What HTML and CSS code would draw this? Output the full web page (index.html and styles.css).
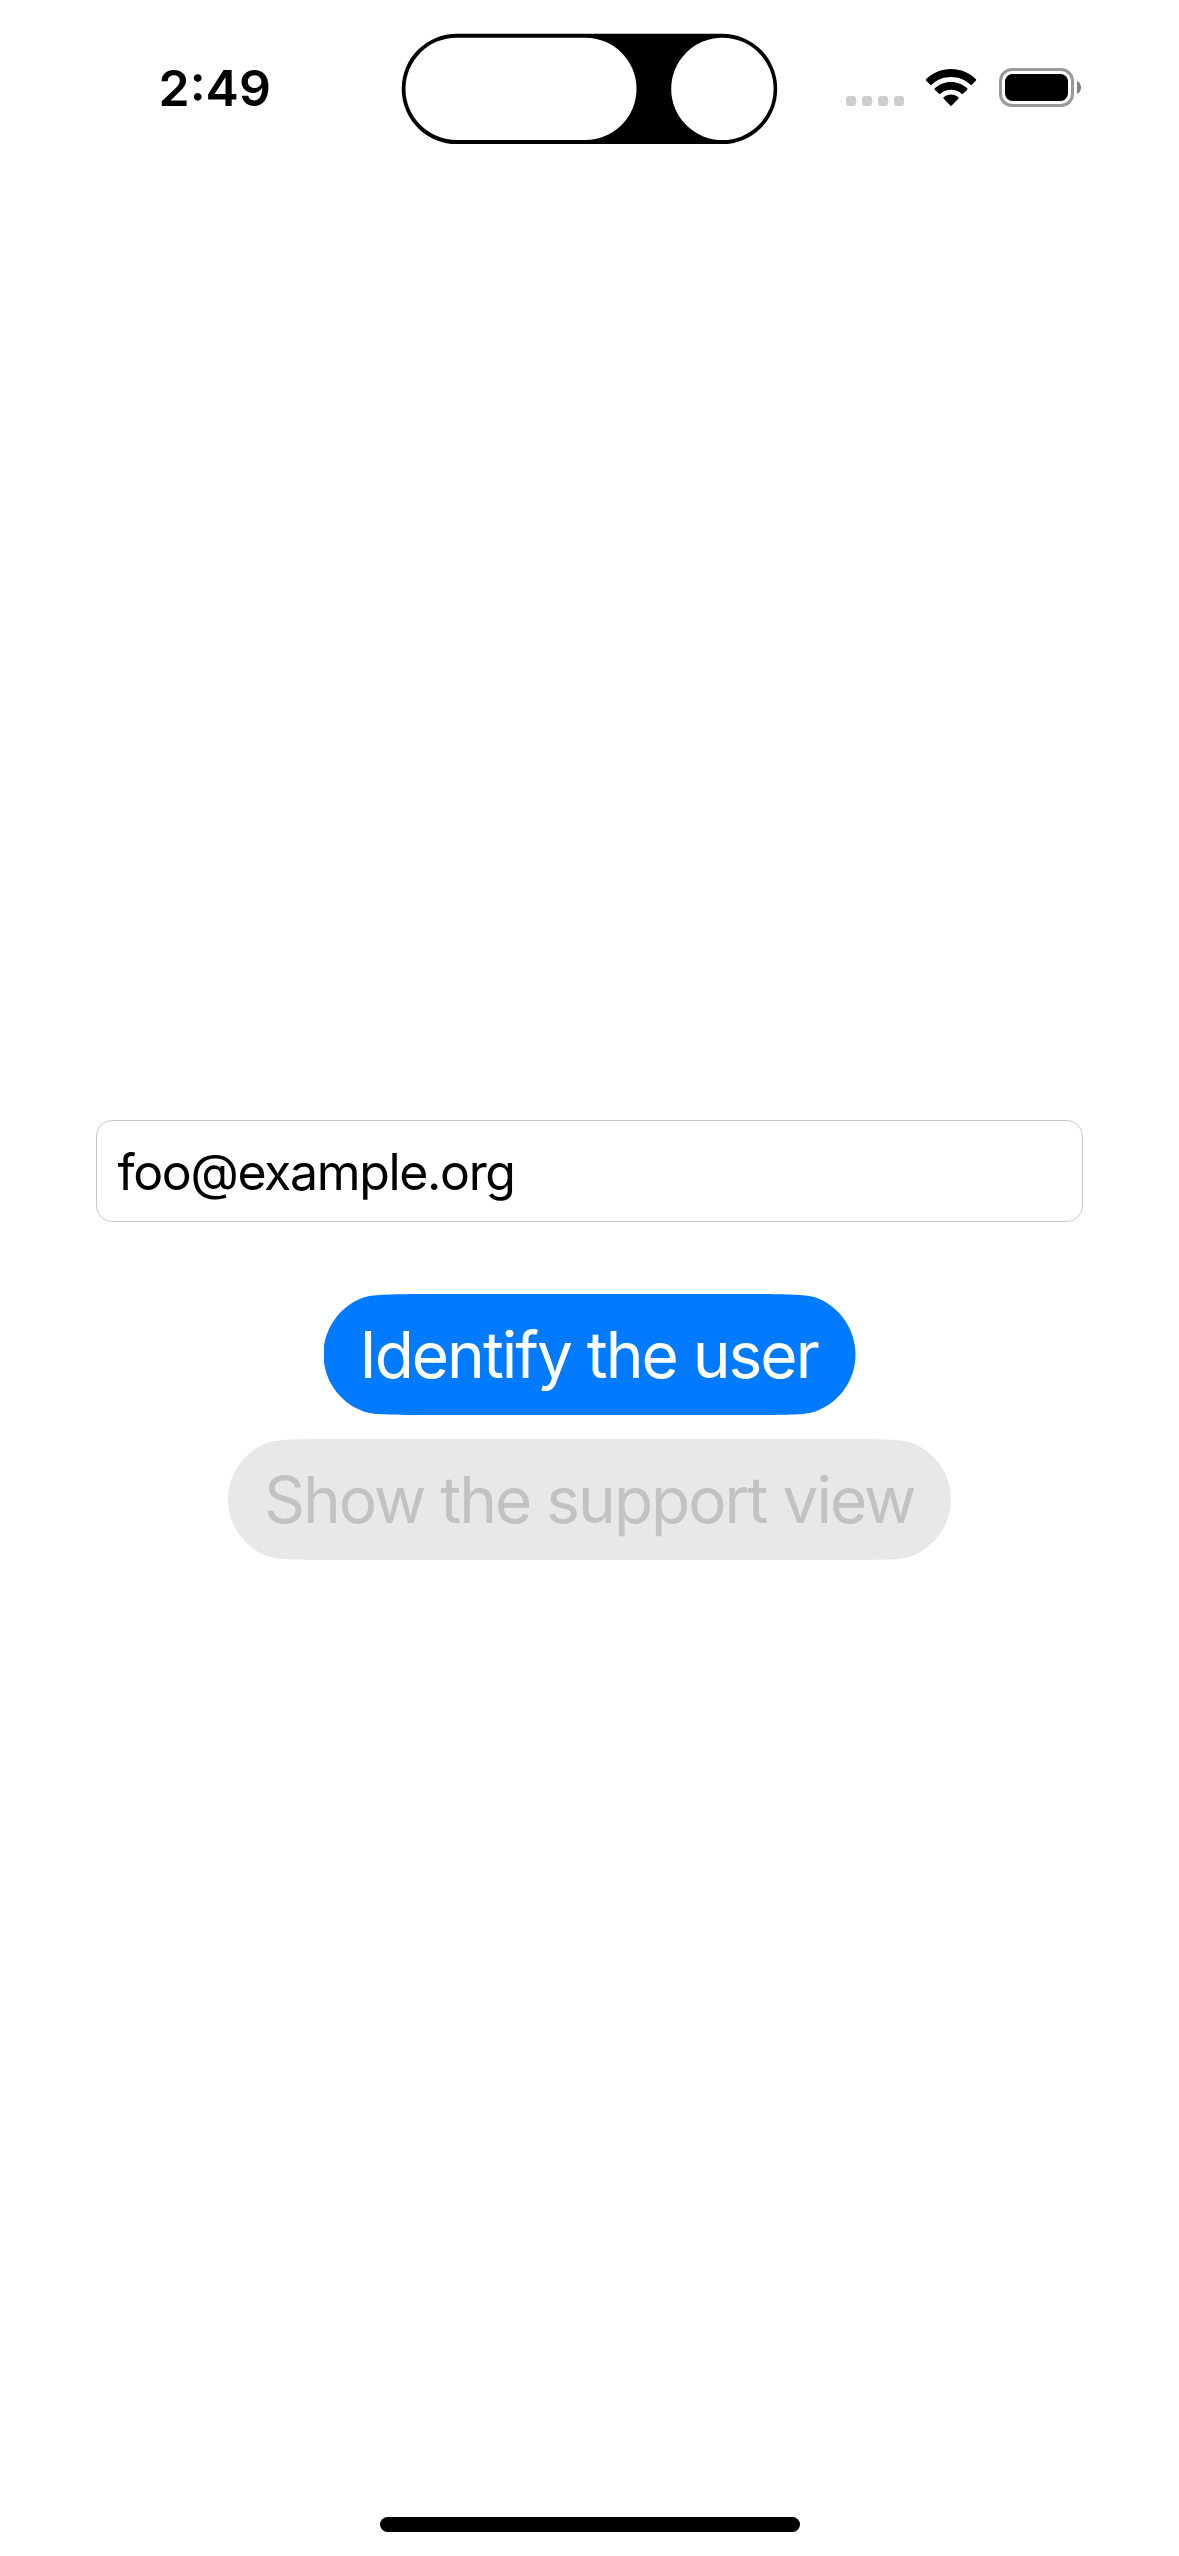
FILE: index.html
```html
<!DOCTYPE html>
<html lang="en">
<head>
<meta charset="utf-8">
<title>Support</title>
<link rel="stylesheet" href="styles.css">
</head>
<body>
<div class="screen">
  <header class="status-bar">
    <time class="clock">2:49</time>
    <svg class="island" viewBox="0 0 377 112" aria-hidden="true">
      <rect x="0.7" y="0.7" width="375.5" height="110.4" rx="55.2" fill="#000"/>
      <rect x="4.5" y="4.7" width="231" height="102.3" rx="51.1" fill="#fff"/>
      <circle cx="321.4" cy="55.9" r="51.2" fill="#fff"/>
    </svg>
    <div class="indicators">
      <div class="signal"><i></i><i></i><i></i><i></i></div>
      <svg class="wifi" viewBox="0 0 52 38" aria-hidden="true">
        <path d="M26 0C35.7 0 44.6 3.8 51 10.2Q51.6 10.9 51 11.6L46.8 15.7Q46.1 16.3 45.4 15.7C40.2 10.7 33.5 8 26 8S11.8 10.7 6.6 15.7Q5.9 16.3 5.2 15.7L1 11.6Q.4 10.9 1 10.2C7.4 3.8 16.3 0 26 0Z"/>
        <path d="M26 13C32.2 13 37.9 15.3 42.2 19.3Q42.9 20 42.2 20.7L38 24.8Q37.3 25.4 36.6 24.8C33.7 22.2 30.1 20.8 26 20.8S18.3 22.2 15.4 24.8Q14.7 25.4 14 24.8L9.8 20.7Q9.1 20 9.8 19.3C14.1 15.3 19.8 13 26 13Z"/>
        <path d="M26 25.6C28.8 25.6 31.3 26.6 33.3 28.3Q34 29 33.3 29.7L26.7 36.5Q26 37.2 25.3 36.5L18.7 29.7Q18 29 18.7 28.3C20.7 26.6 23.2 25.6 26 25.6Z"/>
      </svg>
      <svg class="battery" viewBox="0 0 83 39" aria-hidden="true">
        <rect x="1.5" y="1.5" width="72" height="36" rx="11.5" fill="none" stroke="#999" stroke-width="3"/>
        <rect x="6" y="6" width="63" height="27" rx="7.5" fill="#000"/>
        <path d="M78 13C80.8 14.2 82 16.7 82 19.5S80.8 24.8 78 26Z" fill="#808080"/>
      </svg>
    </div>
  </header>
  <main class="content">
    <div class="field" role="textbox"><span class="field-text">foo@example.org</span></div>
    <button class="pill primary"><span class="label">Identify the user</span></button>
    <button class="pill muted" disabled><span class="label">Show the support view</span></button>
  </main>
  <footer class="home"><div class="home-bar"></div></footer>
</div>
</body>
</html>
```
FILE: styles.css
```css
* { box-sizing: border-box; }
body {
  margin: 0;
  background: #fff;
  color: #000;
  font-family: Inter, "Liberation Sans", sans-serif;
}
.screen {
  width: 1179px;
  height: 2556px;
  display: flex;
  flex-direction: column;
}
.status-bar {
  height: 177px;
  display: grid;
  grid-template-columns: 401px 377px 1fr;
  align-items: start;
  padding-top: 33px;
}
.clock {
  padding-left: 158.5px;
  margin-top: 25px;
  font-size: 50px;
  line-height: 60px;
  font-weight: 600;
  white-space: nowrap;
}
.island { width: 377px; height: 112px; }
.indicators {
  display: flex;
  align-items: flex-start;
  padding: 35px 0 0 68px;
}
.signal { display: flex; gap: 6px; margin-top: 28px; }
.signal i { width: 10px; height: 10px; border-radius: 3px; background: #ccc; }
.wifi { width: 52px; height: 38px; margin: 1px 0 0 21px; }
.battery { width: 83px; height: 39px; margin-left: 22px; }
.content {
  flex: 1;
  padding: 943px 96px 0;
  display: flex;
  flex-direction: column;
  align-items: center;
}
.field {
  width: 987px;
  height: 102px;
  border: 1px solid #c9c9c9;
  border-radius: 16px;
  padding: 21px 0 0 20.5px;
  margin-bottom: 72px;
}
.field-text { display: block; font-size: 50px; line-height: 60px; letter-spacing: -1.35px; white-space: nowrap; }
.pill {
  height: 121px;
  border: 0;
  padding: 0;
  font: 400 64px/78px Inter, "Liberation Sans", sans-serif;
  letter-spacing: -2.03px;
  text-align: left;
  white-space: nowrap;
}
.label { display: block; }
.primary {
  width: 532px;
  padding-left: 36px;
  margin-bottom: 24px;
  background: #007aff;
  color: #fff;
  clip-path: path("M0 60.5C0 35.1 16.1 12.2 40 3.6C50 .3 62 .6 92 0H440C470 .6 482 .3 492 3.6C515.9 12.2 532 35.1 532 60.5S515.9 108.8 492 117.4C482 120.7 470 120.4 440 121H92C62 120.4 50 120.7 40 117.4C16.1 108.8 0 85.9 0 60.5Z");
}
.muted {
  width: 723px;
  padding-left: 36px;
  background: #e8e8ea;
  color: #c2c2c4;
  clip-path: path("M0 60.5C0 35.1 16.1 12.2 40 3.6C50 .3 62 .6 92 0H631C661 .6 673 .3 683 3.6C706.9 12.2 723 35.1 723 60.5S706.9 108.8 683 117.4C673 120.7 661 120.4 631 121H92C62 120.4 50 120.7 40 117.4C16.1 108.8 0 85.9 0 60.5Z");
}
.home { height: 39px; display: flex; justify-content: center; }
.home-bar { width: 420px; height: 15px; border-radius: 7.5px; background: #000; }
```
